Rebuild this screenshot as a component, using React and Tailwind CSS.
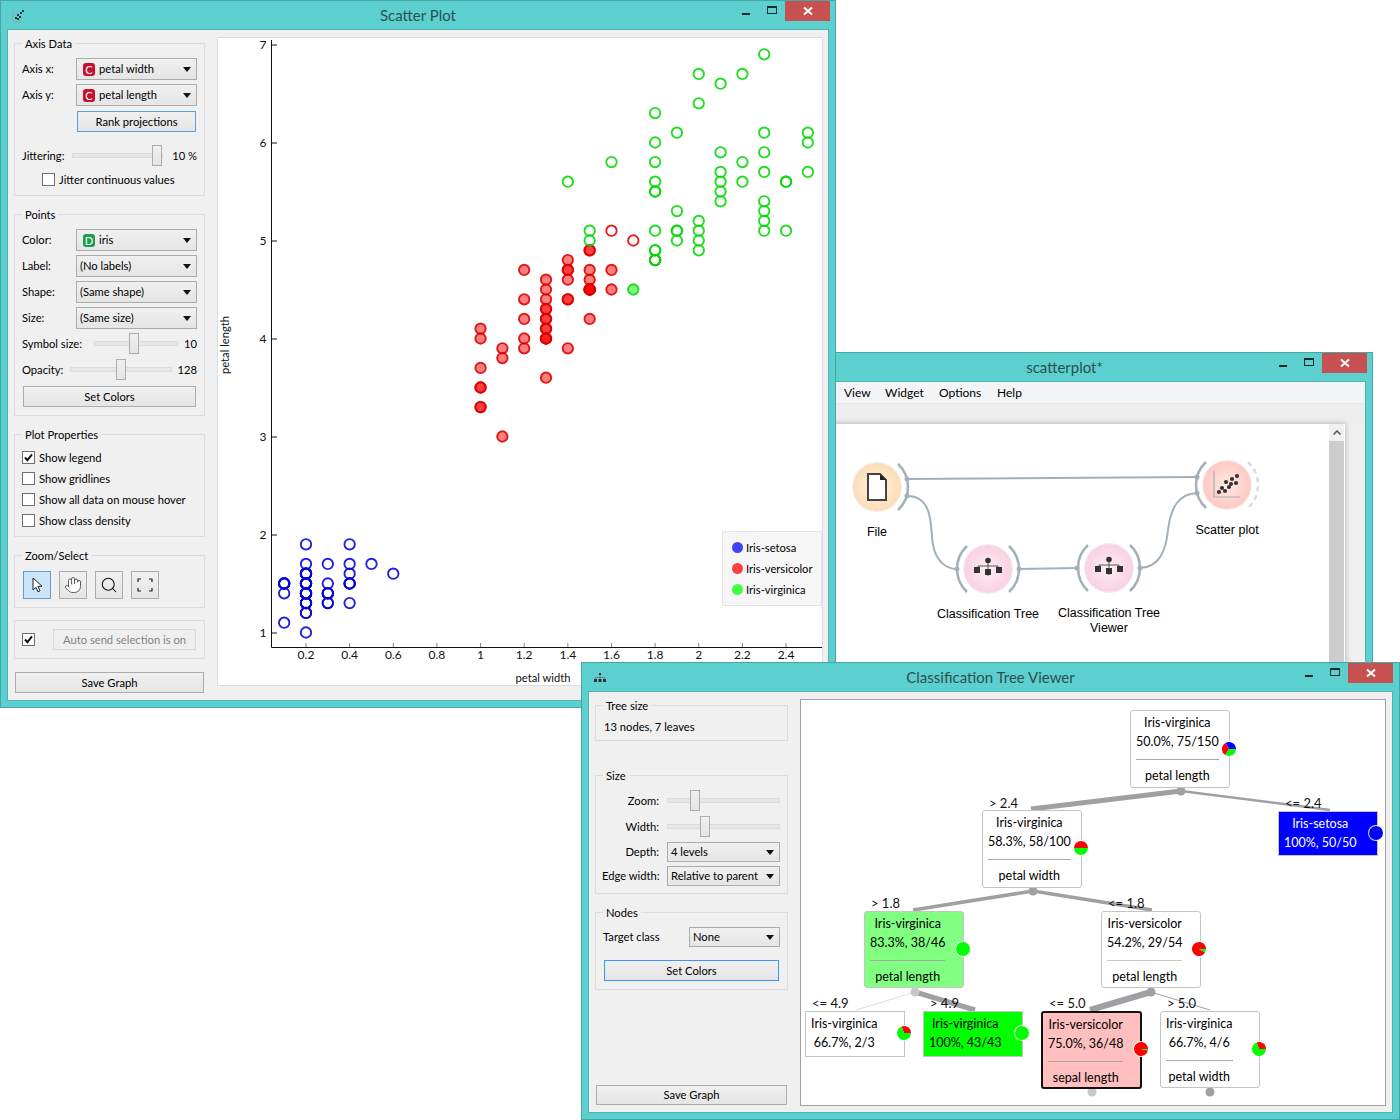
import { Hand, Search } from "lucide-react";

const setosa = "1.4 .2,1.4 .2,1.3 .2,1.5 .2,1.4 .2,1.7 .4,1.4 .3,1.5 .2,1.4 .2,1.5 .1,1.5 .2,1.6 .2,1.4 .1,1.1 .1,1.2 .2,1.5 .4,1.3 .4,1.4 .3,1.7 .3,1.5 .3,1.7 .2,1.5 .4,1.0 .2,1.7 .5,1.9 .2,1.6 .2,1.6 .4,1.5 .2,1.4 .2,1.6 .2,1.6 .2,1.5 .4,1.5 .1,1.4 .2,1.5 .1,1.2 .2,1.3 .2,1.5 .1,1.3 .2,1.5 .2,1.3 .3,1.3 .3,1.3 .2,1.6 .6,1.9 .4,1.4 .3,1.6 .2,1.4 .2,1.5 .2,1.4 .2";
const versicolor = "4.7 1.4,4.5 1.5,4.9 1.5,4.0 1.3,4.6 1.5,4.5 1.3,4.7 1.6,3.3 1.0,4.6 1.3,3.9 1.4,3.5 1.0,4.2 1.5,4.0 1.0,4.7 1.4,3.6 1.3,4.4 1.4,4.5 1.5,4.1 1.0,4.5 1.5,3.9 1.1,4.8 1.8,4.0 1.3,4.9 1.5,4.7 1.2,4.3 1.3,4.4 1.4,4.8 1.4,5.0 1.7,4.5 1.5,3.5 1.0,3.8 1.1,3.7 1.0,3.9 1.2,5.1 1.6,4.5 1.5,4.5 1.6,4.7 1.5,4.4 1.3,4.1 1.3,4.0 1.3,4.4 1.2,4.6 1.4,4.0 1.2,3.3 1.0,4.2 1.3,4.2 1.2,4.2 1.3,4.3 1.3,3.0 1.1,4.1 1.3";
const virginica = "6.0 2.5,5.1 1.9,5.9 2.1,5.6 1.8,5.8 2.2,6.6 2.1,4.5 1.7,6.3 1.8,5.8 1.8,6.1 2.5,5.1 2.0,5.3 1.9,5.5 2.1,5.0 2.0,5.1 2.4,5.3 2.3,5.5 1.8,6.7 2.2,6.9 2.3,5.0 1.5,5.7 2.3,4.9 2.0,6.7 2.0,4.9 1.8,5.7 2.1,6.0 1.8,4.8 1.8,4.9 1.8,5.6 2.1,5.8 1.6,6.1 1.9,6.4 2.0,5.6 2.2,5.1 1.5,5.6 1.4,6.1 2.3,5.6 2.4,5.5 1.8,4.8 1.8,5.4 2.1,5.6 2.4,5.1 2.3,5.1 1.9,5.9 2.3,5.7 2.5,5.2 2.3,5.0 1.9,5.2 2.0,5.4 2.3,5.1 1.8";

const parse = (s) => s.split(",").map((p) => p.split(" ").map(Number));
const px = (v) => 306 + (v - 0.2) * 218.2;
const py = (v) => 633 - (v - 1) * 98;

const species = [
  { pts: parse(setosa), stroke: "rgb(0,0,216)", fill: "#0000ff" },
  { pts: parse(versicolor), stroke: "rgb(216,0,0)", fill: "#ff0000" },
  { pts: parse(virginica), stroke: "rgb(0,216,0)", fill: "#00ff00" },
];

function Caret() {
  return (
    <svg width="8" height="5" viewBox="0 0 8 5" className="shrink-0">
      <path d="M0 0h8L4 5z" fill="#111" />
    </svg>
  );
}

function Combo({ className = "", children }) {
  return (
    <div className={`flex items-center border border-[#acacac] bg-gradient-to-b from-[#f0f0f0] to-[#e5e5e5] pl-[3px] pr-[5px] ${className}`}>
      <div className="flex min-w-0 flex-1 items-center whitespace-nowrap">{children}</div>
      <Caret />
    </div>
  );
}

function TypeBadge({ letter, color }) {
  return (
    <span className={`mx-[3px] flex h-[13px] w-[12px] items-center justify-center rounded-[3px] text-[11px] leading-none text-white ${color}`}>
      {letter}
    </span>
  );
}

function Btn({ className = "", children }) {
  return (
    <div className={`flex items-center justify-center border border-[#acacac] bg-gradient-to-b from-[#f0f0f0] to-[#e5e5e5] ${className}`}>
      {children}
    </div>
  );
}

function Slider({ className = "", handle }) {
  return (
    <div className={`relative h-[21px] ${className}`}>
      <div className="absolute inset-x-0 top-[8px] h-[5px] border border-[#dcdcdc] bg-[#e7e7e7]" />
      <div className={`absolute top-0 h-[21px] w-[10px] border border-[#acacac] bg-gradient-to-b from-[#f0f0f0] to-[#e5e5e5] ${handle}`} />
    </div>
  );
}

function Checkbox({ checked }) {
  return (
    <div className="flex h-[13px] w-[13px] shrink-0 items-center justify-center border border-[#707070] bg-white">
      {checked && (
        <svg width="11" height="11" viewBox="0 0 11 11">
          <path d="M2 5.5l2.4 2.6L9 2.4" fill="none" stroke="#111" strokeWidth="2" />
        </svg>
      )}
    </div>
  );
}

function CheckRow({ checked, children }) {
  return (
    <div className="flex h-[13px] items-center gap-[4px] whitespace-nowrap">
      <Checkbox checked={checked} />
      {children}
    </div>
  );
}

function Group({ title, className = "", children }) {
  return (
    <div className={`relative border border-[#dcdcdc] ${className}`}>
      {title && (
        <span className="absolute -top-[8px] left-[7px] whitespace-nowrap bg-[#f0f0f0] px-[3px] leading-[16px]">
          {title}
        </span>
      )}
      {children}
    </div>
  );
}

function Window({ className = "", title, icon, children, capClass = "pr-[5px]" }) {
  return (
    <div className={`absolute flex flex-col border border-[#46a5a5] bg-[#5ccfcf] ${className}`}>
      <div className={`relative flex h-[29px] shrink-0 items-start justify-end ${capClass}`}>
        <div className="absolute inset-x-0 top-[3px] text-center text-[15px] leading-[22px] text-[#2b4f4f]">{title}</div>
        {icon}
        <div className="relative flex h-[20px] w-[27px] items-center justify-center">
          <div className="mt-[5px] h-[2px] w-[8px] bg-[#1c2c2c]" />
        </div>
        <div className="relative flex h-[20px] w-[26px] items-center justify-center">
          <div className="mb-[2px] h-[8px] w-[10px] border border-t-2 border-[#1c2c2c]" />
        </div>
        <div className="relative flex h-[20px] w-[45px] items-center justify-center bg-[#c75050]">
          <svg width="10" height="10" viewBox="0 0 10 10">
            <path d="M1 1.5l8 7M9 1.5l-8 7" stroke="#fff" strokeWidth="2" />
          </svg>
        </div>
      </div>
      <div className="mx-[7px] mb-[7px] min-h-0 flex-1 bg-[#f0f0f0] ring-1 ring-[#50b4b4]">{children}</div>
    </div>
  );
}

function ScatterChart() {
  const yTicks = [1, 2, 3, 4, 5, 6, 7];
  const xTicks = [0.2, 0.4, 0.6, 0.8, 1, 1.2, 1.4, 1.6, 1.8, 2, 2.2, 2.4];
  return (
    <svg width="604" height="647" viewBox="218 38 604 647" className="block" fontSize="12" fill="#111">
      <path d="M271.5 40V647.5H822" fill="none" stroke="#111" />
      {yTicks.map((v) => (
        <g key={v}>
          <path d={`M272 ${py(v)}h5`} stroke="#111" />
          <text x="263" y={py(v) + 4} textAnchor="middle">{v}</text>
        </g>
      ))}
      {xTicks.map((v) => (
        <g key={v}>
          <path d={`M${px(v)} 647v-4`} stroke="#888" />
          <text x={px(v)} y="659" textAnchor="middle">{v}</text>
        </g>
      ))}
      <text x="543" y="682" textAnchor="middle" fontSize="11.2">petal width</text>
      <text transform="translate(229 345) rotate(-90)" textAnchor="middle" fontSize="11.2">petal length</text>
      {species.map((s) =>
        s.pts.map(([pl, pw], i) => {
          const hit = pl > 2.4 && pl <= 4.9 && pw <= 1.7;
          return (
            <circle
              key={i}
              cx={px(pw)}
              cy={py(pl) - 0.5}
              r="5.2"
              stroke={s.stroke}
              strokeOpacity="0.87"
              strokeWidth="1.9"
              fill={hit ? s.fill : "none"}
              fillOpacity="0.5"
            />
          );
        })
      )}
    </svg>
  );
}

function ScatterWindow() {
  return (
    <Window
      className="left-0 top-0 z-20 h-[708px] w-[836px]"
      title="Scatter Plot"
      icon={
        <svg width="14" height="14" viewBox="0 0 14 14" className="absolute left-[11px] top-[8px]">
          <path d="M1 2v11h12" stroke="#8aa" fill="none" />
          <g fill="#333">
            <rect x="3" y="8" width="2" height="2" /><rect x="5" y="5" width="2" height="2" /><rect x="7" y="7" width="2" height="2" />
            <rect x="8" y="3" width="2" height="2" /><rect x="10" y="1" width="2" height="2" /><rect x="5" y="9" width="2" height="2" />
          </g>
        </svg>
      }
    >
      <div className="flex h-full">
        <div className="ml-[6px] flex h-full w-[191px] shrink-0 flex-col pt-[13px]">
          <Group title="Axis Data" className="h-[153px] px-[7px] pt-[14px]">
            <div className="flex flex-col gap-[4px]">
              <div className="flex items-center justify-between">
                <span>Axis x:</span>
                <Combo className="h-[22px] w-[121px]"><TypeBadge letter="C" color="bg-[#c8102e]" /><span className="ml-px">petal width</span></Combo>
              </div>
              <div className="flex items-center justify-between">
                <span>Axis y:</span>
                <Combo className="h-[22px] w-[121px]"><TypeBadge letter="C" color="bg-[#c8102e]" /><span className="ml-px">petal length</span></Combo>
              </div>
            </div>
            <Btn className="ml-[55px] mt-[5px] h-[21px] w-[119px] !border-[#5a9fd8]">Rank projections</Btn>
            <div className="mt-[13px] flex items-center">
              <span className="w-[50px]">Jittering:</span>
              <Slider className="w-[91px]" handle="left-[80px]" />
              <span className="ml-auto">10 %</span>
            </div>
            <div className="ml-[20px] mt-[7px]"><CheckRow>Jitter continuous values</CheckRow></div>
          </Group>

          <Group title="Points" className="mt-[18px] h-[202px] px-[7px] pt-[14px]">
            <div className="flex flex-col gap-[4px]">
              <div className="flex items-center justify-between">
                <span>Color:</span>
                <Combo className="h-[22px] w-[121px]"><TypeBadge letter="D" color="bg-[#1e9e4a]" /><span className="ml-px">iris</span></Combo>
              </div>
              <div className="flex items-center justify-between">
                <span>Label:</span>
                <Combo className="h-[22px] w-[121px]">(No labels)</Combo>
              </div>
              <div className="flex items-center justify-between">
                <span>Shape:</span>
                <Combo className="h-[22px] w-[121px]">(Same shape)</Combo>
              </div>
              <div className="flex items-center justify-between">
                <span>Size:</span>
                <Combo className="h-[22px] w-[121px]">(Same size)</Combo>
              </div>
            </div>
            <div className="mt-[4px] flex items-center">
              <span className="w-[72px] whitespace-nowrap">Symbol size:</span>
              <Slider className="w-[84px]" handle="left-[35px]" />
              <span className="ml-auto">10</span>
            </div>
            <div className="mt-[5px] flex items-center">
              <span className="w-[48px]">Opacity:</span>
              <Slider className="w-[102px]" handle="left-[46px]" />
              <span className="ml-auto">128</span>
            </div>
            <Btn className="ml-px mt-[6px] h-[21px] w-[173px]">Set Colors</Btn>
          </Group>

          <Group title="Plot Properties" className="mt-[18px] h-[103px] pl-[7px] pt-[16px]">
            <div className="flex flex-col gap-[8px]">
              <CheckRow checked>Show legend</CheckRow>
              <CheckRow>Show gridlines</CheckRow>
              <CheckRow>Show all data on mouse hover</CheckRow>
              <CheckRow>Show class density</CheckRow>
            </div>
          </Group>

          <Group title="Zoom/Select" className="mt-[18px] h-[53px] pl-[8px] pt-[15px]">
            <div className="flex gap-[8px]">
              <div className="flex h-[28px] w-[28px] items-center justify-center border border-[#5a9fd8] bg-[#cce4f7]">
                <svg width="11" height="16" viewBox="0 0 11 16">
                  <path d="M1 1v12l3-2.6 2 4.4 2-1-2-4.3 4-.3z" fill="#fff" stroke="#222" strokeWidth="1" />
                </svg>
              </div>
              <Btn className="h-[28px] w-[28px]"><Hand size={18} strokeWidth={1.3} color="#555" fill="#fff" /></Btn>
              <Btn className="h-[28px] w-[28px]"><Search size={18} strokeWidth={1.4} color="#111" /></Btn>
              <Btn className="h-[28px] w-[28px]">
                <svg width="16" height="14" viewBox="0 0 16 14">
                  <path d="M1 4V1h3M12 1h3v3M1 10v3h3M12 13h3v-3" fill="none" stroke="#222" strokeWidth="1.2" />
                </svg>
              </Btn>
            </div>
          </Group>

          <Group className="mt-[12px] flex h-[39px] items-center pl-[7px]">
            <Checkbox checked />
            <div className="ml-[18px] flex h-[21px] w-[143px] items-center justify-center border border-[#d9d9d9] bg-[#efefef] text-[#838383]">
              Auto send selection is on
            </div>
          </Group>

          <Btn className="ml-px mt-[13px] h-[21px] w-[189px]">Save Graph</Btn>
        </div>

        <div className="relative ml-[12px] mt-[7px] h-[649px] w-[606px] border border-[#dcdcdc] bg-white">
          <ScatterChart />
          <div className="absolute left-[504px] top-[493px] flex h-[75px] w-[100px] flex-col justify-center gap-[6px] border border-[#e3e3e3] bg-[#f6f6f6] pl-[9px] leading-[15px]">
            {[["bg-[#4040ff]", "Iris-setosa"], ["bg-[#ff4040]", "Iris-versicolor"], ["bg-[#40ff40]", "Iris-virginica"]].map(([c, t]) => (
              <div key={t} className="flex items-center gap-[3px] whitespace-nowrap">
                <span className={`h-[11px] w-[11px] rounded-full ${c}`} />
                {t}
              </div>
            ))}
          </div>
        </div>
      </div>
    </Window>
  );
}

function WidgetNode({ className = "", circle, label, children }) {
  return (
    <div className={`absolute flex w-[120px] flex-col items-center text-center font-['Liberation_Sans'] text-[12.5px] leading-[15px] ${className}`}>
      <div className={`flex h-[48px] w-[48px] items-center justify-center rounded-full shadow-[0_0_0_1px_#eeeeee] ${circle}`}>
        {children}
      </div>
      <div className="mt-[14px]">{label}</div>
    </div>
  );
}

const linkColor = "#a2b1b9";

function arc(cx, cy, s, dash) {
  return (
    <path
      d={`M${cx + s * 21} ${cy - 23}A31.5 31.5 0 0 ${s > 0 ? 1 : 0} ${cx + s * 21} ${cy + 23}`}
      fill="none"
      stroke={dash ? "#d6dde0" : linkColor}
      strokeWidth="2.5"
      strokeDasharray={dash ? "5 4" : undefined}
    />
  );
}

function TreeIcon() {
  return (
    <svg width="30" height="24" viewBox="0 0 30 24">
      <path d="M15 4v15M5 12v-3h20v3" fill="none" stroke="#555" strokeWidth="1" />
      <circle cx="15" cy="3.5" r="2.8" fill="#333" />
      <rect x="1" y="10" width="6" height="6" fill="#333" />
      <rect x="12" y="12" width="6" height="6" fill="#333" />
      <rect x="23" y="10" width="6" height="6" fill="#333" />
    </svg>
  );
}

function CanvasWindow() {
  return (
    <Window className="left-[756px] top-[352px] z-10 h-[500px] w-[617px]" title="scatterplot*">
      <div className="flex h-full flex-col">
        <div className="flex h-[22px] items-center border-b border-[#e8e8e8] bg-[#f3f4f6] pl-[80px] text-[12px]">
          <span className="w-[41px]">View</span>
          <span className="w-[54px]">Widget</span>
          <span className="w-[58px]">Options</span>
          <span>Help</span>
        </div>
        <div className="h-[20px] bg-[#eeeeee]" />
        <div className="ml-[13px] mr-[20px] flex flex-1 bg-white shadow-[0_0_6px_rgba(0,0,0,0.3)]">
          <div className="relative flex-1">
            <svg width="553" height="300" viewBox="777 424 553 300" className="absolute left-0 top-0">
              <g fill="none" stroke={linkColor} strokeWidth="2">
                <path d="M907 479L1197 477" />
                <path d="M907 496C935 496 930 530 933 545C936 560 945 569 957 569" />
                <path d="M1019 569L1077 568" />
                <path d="M1140 568C1160 567 1166 550 1168 530C1171 505 1180 494 1197 493" />
              </g>
              {arc(877, 487, 1)}
              {arc(988, 569, -1)}
              {arc(988, 569, 1)}
              {arc(1109, 568, -1)}
              {arc(1109, 568, 1)}
              {arc(1227, 485, -1)}
              {arc(1227, 485, 1, true)}
              <g fill={linkColor}>
                {[[907, 479], [907, 496], [957, 569], [1019, 569], [1077, 568], [1140, 568], [1197, 477], [1197, 493]].map(([x, y]) => (
                  <circle key={x + "-" + y} cx={x} cy={y} r="2.5" />
                ))}
              </g>
            </svg>
            <WidgetNode className="left-[40px] top-[39px]" circle="bg-[radial-gradient(circle,#fff4e6_0%,#fdd3a2_100%)]" label="File">
              <svg width="20" height="28" viewBox="0 0 20 28">
                <path d="M1 1h12l6 6v20H1z" fill="#fff" stroke="#444" strokeWidth="2" />
                <path d="M13 1l6 6h-6z" fill="#222" />
              </svg>
            </WidgetNode>
            <WidgetNode className="left-[151px] top-[121px]" circle="bg-[radial-gradient(circle,#fdeef4_0%,#f8c5da_100%)]" label="Classification Tree">
              <TreeIcon />
            </WidgetNode>
            <WidgetNode className="left-[272px] top-[120px]" circle="bg-[radial-gradient(circle,#fdeef4_0%,#f8c5da_100%)]" label={<>Classification Tree<br />Viewer</>}>
              <TreeIcon />
            </WidgetNode>
            <WidgetNode className="left-[390px] top-[37px]" circle="bg-[radial-gradient(circle,#ffe9e5_0%,#ffbcb2_100%)]" label="Scatter plot">
              <svg width="30" height="30" viewBox="0 0 30 30">
                <path d="M2 1v26h26" fill="none" stroke="#aab" strokeWidth="1.2" />
                <g fill="#333">
                  {[[7, 22], [10, 18], [13, 21], [14, 12], [17, 17], [20, 9], [24, 13], [25, 6], [19, 14]].map(([x, y]) => (
                    <circle key={x + "-" + y} cx={x} cy={y} r="2.1" />
                  ))}
                </g>
              </svg>
            </WidgetNode>
          </div>
          <div className="mr-px flex w-[15px] flex-col bg-[#cdcdcd]">
            <div className="flex h-[17px] items-center justify-center bg-[#f0f0f0]">
              <svg width="8" height="5" viewBox="0 0 8 5"><path d="M.5 4.5L4 1l3.5 3.5" fill="none" stroke="#555" strokeWidth="1.5" /></svg>
            </div>
          </div>
        </div>
      </div>
    </Window>
  );
}

function TreeNode({ className = "", lines, attr, hrClass = "border-[#a8a8a8]" }) {
  return (
    <div className={`absolute pl-[5px] pt-[2px] text-[12.5px] leading-[19px] ${className}`}>
      <div className="w-fit text-center">
        {lines.map((l) => (
          <div key={l} className="whitespace-nowrap">{l}</div>
        ))}
        {attr && (
          <>
            <div className={`mt-[8px] border-t ${hrClass}`} />
            <div className="mt-[6px] whitespace-nowrap">{attr}</div>
          </>
        )}
      </div>
    </div>
  );
}

function wedge(cx, cy, r, a0, a1, fill) {
  const p = (a) => [cx + r * Math.cos((a * Math.PI) / 180), cy - r * Math.sin((a * Math.PI) / 180)];
  const [x0, y0] = p(a0);
  const [x1, y1] = p(a1);
  return <path key={a0} d={`M${cx} ${cy}L${x0} ${y0}A${r} ${r} 0 ${a1 - a0 > 180 ? 1 : 0} 0 ${x1} ${y1}Z`} fill={fill} />;
}

function Pie({ x, y, parts }) {
  return (
    <g>
      <circle cx={x} cy={y} r="8" fill="#fff" opacity="0.85" />
      {parts.length === 1 ? <circle cx={x} cy={y} r="7" fill={parts[0]} /> : parts.map(([a, b, c]) => wedge(x, y, 7, a, b, c))}
    </g>
  );
}

const edges = [
  [1181, 791, 1031, 809, 5, "#a0a0a4"],
  [1181, 791, 1330, 810, 2.5, "#a0a0a4"],
  [1033, 891, 913, 910, 3.5, "#a0a0a4"],
  [1033, 891, 1152, 910, 3.5, "#a0a0a4"],
  [915, 992, 856, 1010, 0.6, "#c8c8c8"],
  [915, 992, 975, 1010, 5, "#a0a0a4"],
  [1151, 992, 1090, 1010, 6, "#a0a0a4"],
  [1151, 992, 1210, 1010, 1, "#a0a0a4"],
];

const edgeLabels = [
  [989, 808, "> 2.4"],
  [1285, 808, "<= 2.4"],
  [871, 908, "> 1.8"],
  [1108, 908, "<= 1.8"],
  [812, 1008, "<= 4.9"],
  [930, 1008, "> 4.9"],
  [1049, 1008, "<= 5.0"],
  [1167, 1008, "> 5.0"],
];

function TreeCanvas() {
  return (
    <div className="relative ml-[12px] mt-[7px] h-[407px] w-[586px] border border-[#a0a0a0] bg-white">
      <svg width="584" height="405" viewBox="801 700 584 405" className="absolute left-0 top-0">
        {edges.map(([x1, y1, x2, y2, w, c]) => (
          <line key={x2} x1={x1} y1={y1} x2={x2} y2={y2} stroke={c} strokeWidth={w} />
        ))}
        {[[1181, 791, "#a0a0a4"], [1033, 891, "#a0a0a4"], [915, 992, "#c8c8c8"], [1151, 992, "#a0a0a4"], [1092, 1092, "#c8c8c8"], [1210, 1092, "#a0a0a4"]].map(([x, y, c]) => (
          <circle key={x} cx={x} cy={y} r="4.5" fill={c} />
        ))}
      </svg>

      <TreeNode className="left-[329px] top-[10px] h-[78px] w-[100px] rounded-[3px] border border-[#c4c4c4] bg-white" lines={["Iris-virginica", "50.0%, 75/150"]} attr="petal length" />
      <TreeNode className="left-[181px] top-[110px] h-[78px] w-[100px] rounded-[3px] border border-[#c4c4c4] bg-white" lines={["Iris-virginica", "58.3%, 58/100"]} attr="petal width" />
      <TreeNode className="left-[477px] top-[111px] h-[45px] w-[100px] border border-[#c4c4c4] bg-[#0000ff] text-white" lines={["Iris-setosa", "100%, 50/50"]} />
      <TreeNode className="left-[63px] top-[211px] h-[77px] w-[100px] rounded-[3px] border border-[#c4c4c4] bg-[#80ff80]" lines={["Iris-virginica", "83.3%, 38/46"]} attr="petal length" />
      <TreeNode className="left-[300px] top-[211px] h-[77px] w-[100px] rounded-[3px] border border-[#c4c4c4] bg-white" lines={["Iris-versicolor", "54.2%, 29/54"]} attr="petal length" hrClass="border-[#c8c8c8]" />
      <TreeNode className="left-[4px] top-[311px] h-[46px] w-[100px] border border-[#c4c4c4] bg-white" lines={["Iris-virginica", "66.7%, 2/3"]} />
      <TreeNode className="left-[122px] top-[311px] h-[46px] w-[100px] border border-[#c4c4c4] bg-[#00ff00]" lines={["Iris-virginica", "100%, 43/43"]} />
      <TreeNode className="left-[240px] top-[311px] h-[78px] w-[101px] rounded-[3px] border-2 border-[#111] bg-[#ffbfbf]" lines={["Iris-versicolor", "75.0%, 36/48"]} attr="sepal length" />
      <TreeNode className="left-[359px] top-[311px] h-[77px] w-[100px] rounded-[3px] border border-[#c4c4c4] bg-white" lines={["Iris-virginica", "66.7%, 4/6"]} attr="petal width" />

      <svg width="584" height="405" viewBox="801 700 584 405" className="absolute left-0 top-0" fontSize="13" fill="#111">
        <Pie x={1229} y={749} parts={[[0, 120, "#0000ff"], [120, 240, "#ff0000"], [240, 360, "#00ff00"]]} />
        <Pie x={1081} y={848} parts={[[0, 180, "#ff0000"], [180, 360, "#00ff00"]]} />
        <Pie x={1376} y={833} parts={["#0000ff"]} />
        <Pie x={963} y={949} parts={["#00ff00"]} />
        <Pie x={1199} y={949} parts={[[0, 330, "#ff0000"], [330, 360, "#00ff00"]]} />
        <Pie x={904} y={1033} parts={[[0, 110, "#ff0000"], [110, 360, "#00ff00"]]} />
        <Pie x={1022} y={1033} parts={["#00ff00"]} />
        <Pie x={1141} y={1049} parts={[[0, 348, "#ff0000"], [348, 360, "#00ff00"]]} />
        <Pie x={1259} y={1049} parts={[[0, 110, "#ff0000"], [110, 360, "#00ff00"]]} />
        {edgeLabels.map(([x, y, t]) => (
          <text key={x} x={x} y={y}>{t}</text>
        ))}
      </svg>
    </div>
  );
}

function TreeWindow() {
  return (
    <Window
      className="left-[581px] top-[662px] z-30 h-[458px] w-[819px]"
      capClass="pr-[6px]"
      title="Classification Tree Viewer"
      icon={
        <svg width="14" height="9" viewBox="0 0 14 9" className="absolute left-[11px] top-[10px]">
          <g fill="#333">
            <rect x="6" y="0" width="2" height="2" />
            <rect x="1" y="6" width="3" height="3" /><rect x="5.5" y="6" width="3" height="3" /><rect x="10" y="6" width="3" height="3" />
          </g>
          <path d="M7 2v4M2.5 6V4.5h9V6" stroke="#666" fill="none" strokeWidth="0.7" />
        </svg>
      }
    >
      <div className="flex h-full">
        <div className="ml-[6px] flex h-full w-[193px] shrink-0 flex-col pb-[7px] pt-[13px]">
          <Group title="Tree size" className="h-[36px] pl-[8px] pt-[13px]">13 nodes, 7 leaves</Group>

          <Group title="Size" className="mt-[34px] h-[119px] pl-[6px] pt-[14px]">
            <div className="flex flex-col">
              <div className="flex items-center gap-[8px]">
                <span className="w-[57px] text-right">Zoom:</span>
                <Slider className="w-[113px]" handle="left-[23px]" />
              </div>
              <div className="mt-[5px] flex items-center gap-[8px]">
                <span className="w-[57px] text-right">Width:</span>
                <Slider className="w-[113px]" handle="left-[33px]" />
              </div>
              <div className="mt-[5px] flex items-center gap-[8px]">
                <span className="w-[57px] text-right">Depth:</span>
                <Combo className="h-[20px] w-[113px]">4 levels</Combo>
              </div>
              <div className="mt-[4px] flex items-center gap-[8px]">
                <span className="w-[57px] whitespace-nowrap text-right">Edge width:</span>
                <Combo className="h-[20px] w-[113px]">Relative to parent</Combo>
              </div>
            </div>
          </Group>

          <Group title="Nodes" className="mt-[18px] h-[78px] pl-[7px] pt-[14px]">
            <div className="flex items-center">
              <span className="w-[86px]">Target class</span>
              <Combo className="h-[20px] w-[91px]">None</Combo>
            </div>
            <Btn className="ml-px mt-[13px] h-[21px] w-[175px] !border-[#3399ff]">Set Colors</Btn>
          </Group>

          <Btn className="ml-px mt-auto h-[20px] w-[191px]">Save Graph</Btn>
        </div>
        <TreeCanvas />
      </div>
    </Window>
  );
}

export default function App() {
  return (
    <div className="relative h-[1120px] w-[1400px] overflow-hidden bg-white font-['Lato',sans-serif] text-[11.2px] leading-[16px] text-[#000]">
      <CanvasWindow />
      <ScatterWindow />
      <TreeWindow />
    </div>
  );
}
